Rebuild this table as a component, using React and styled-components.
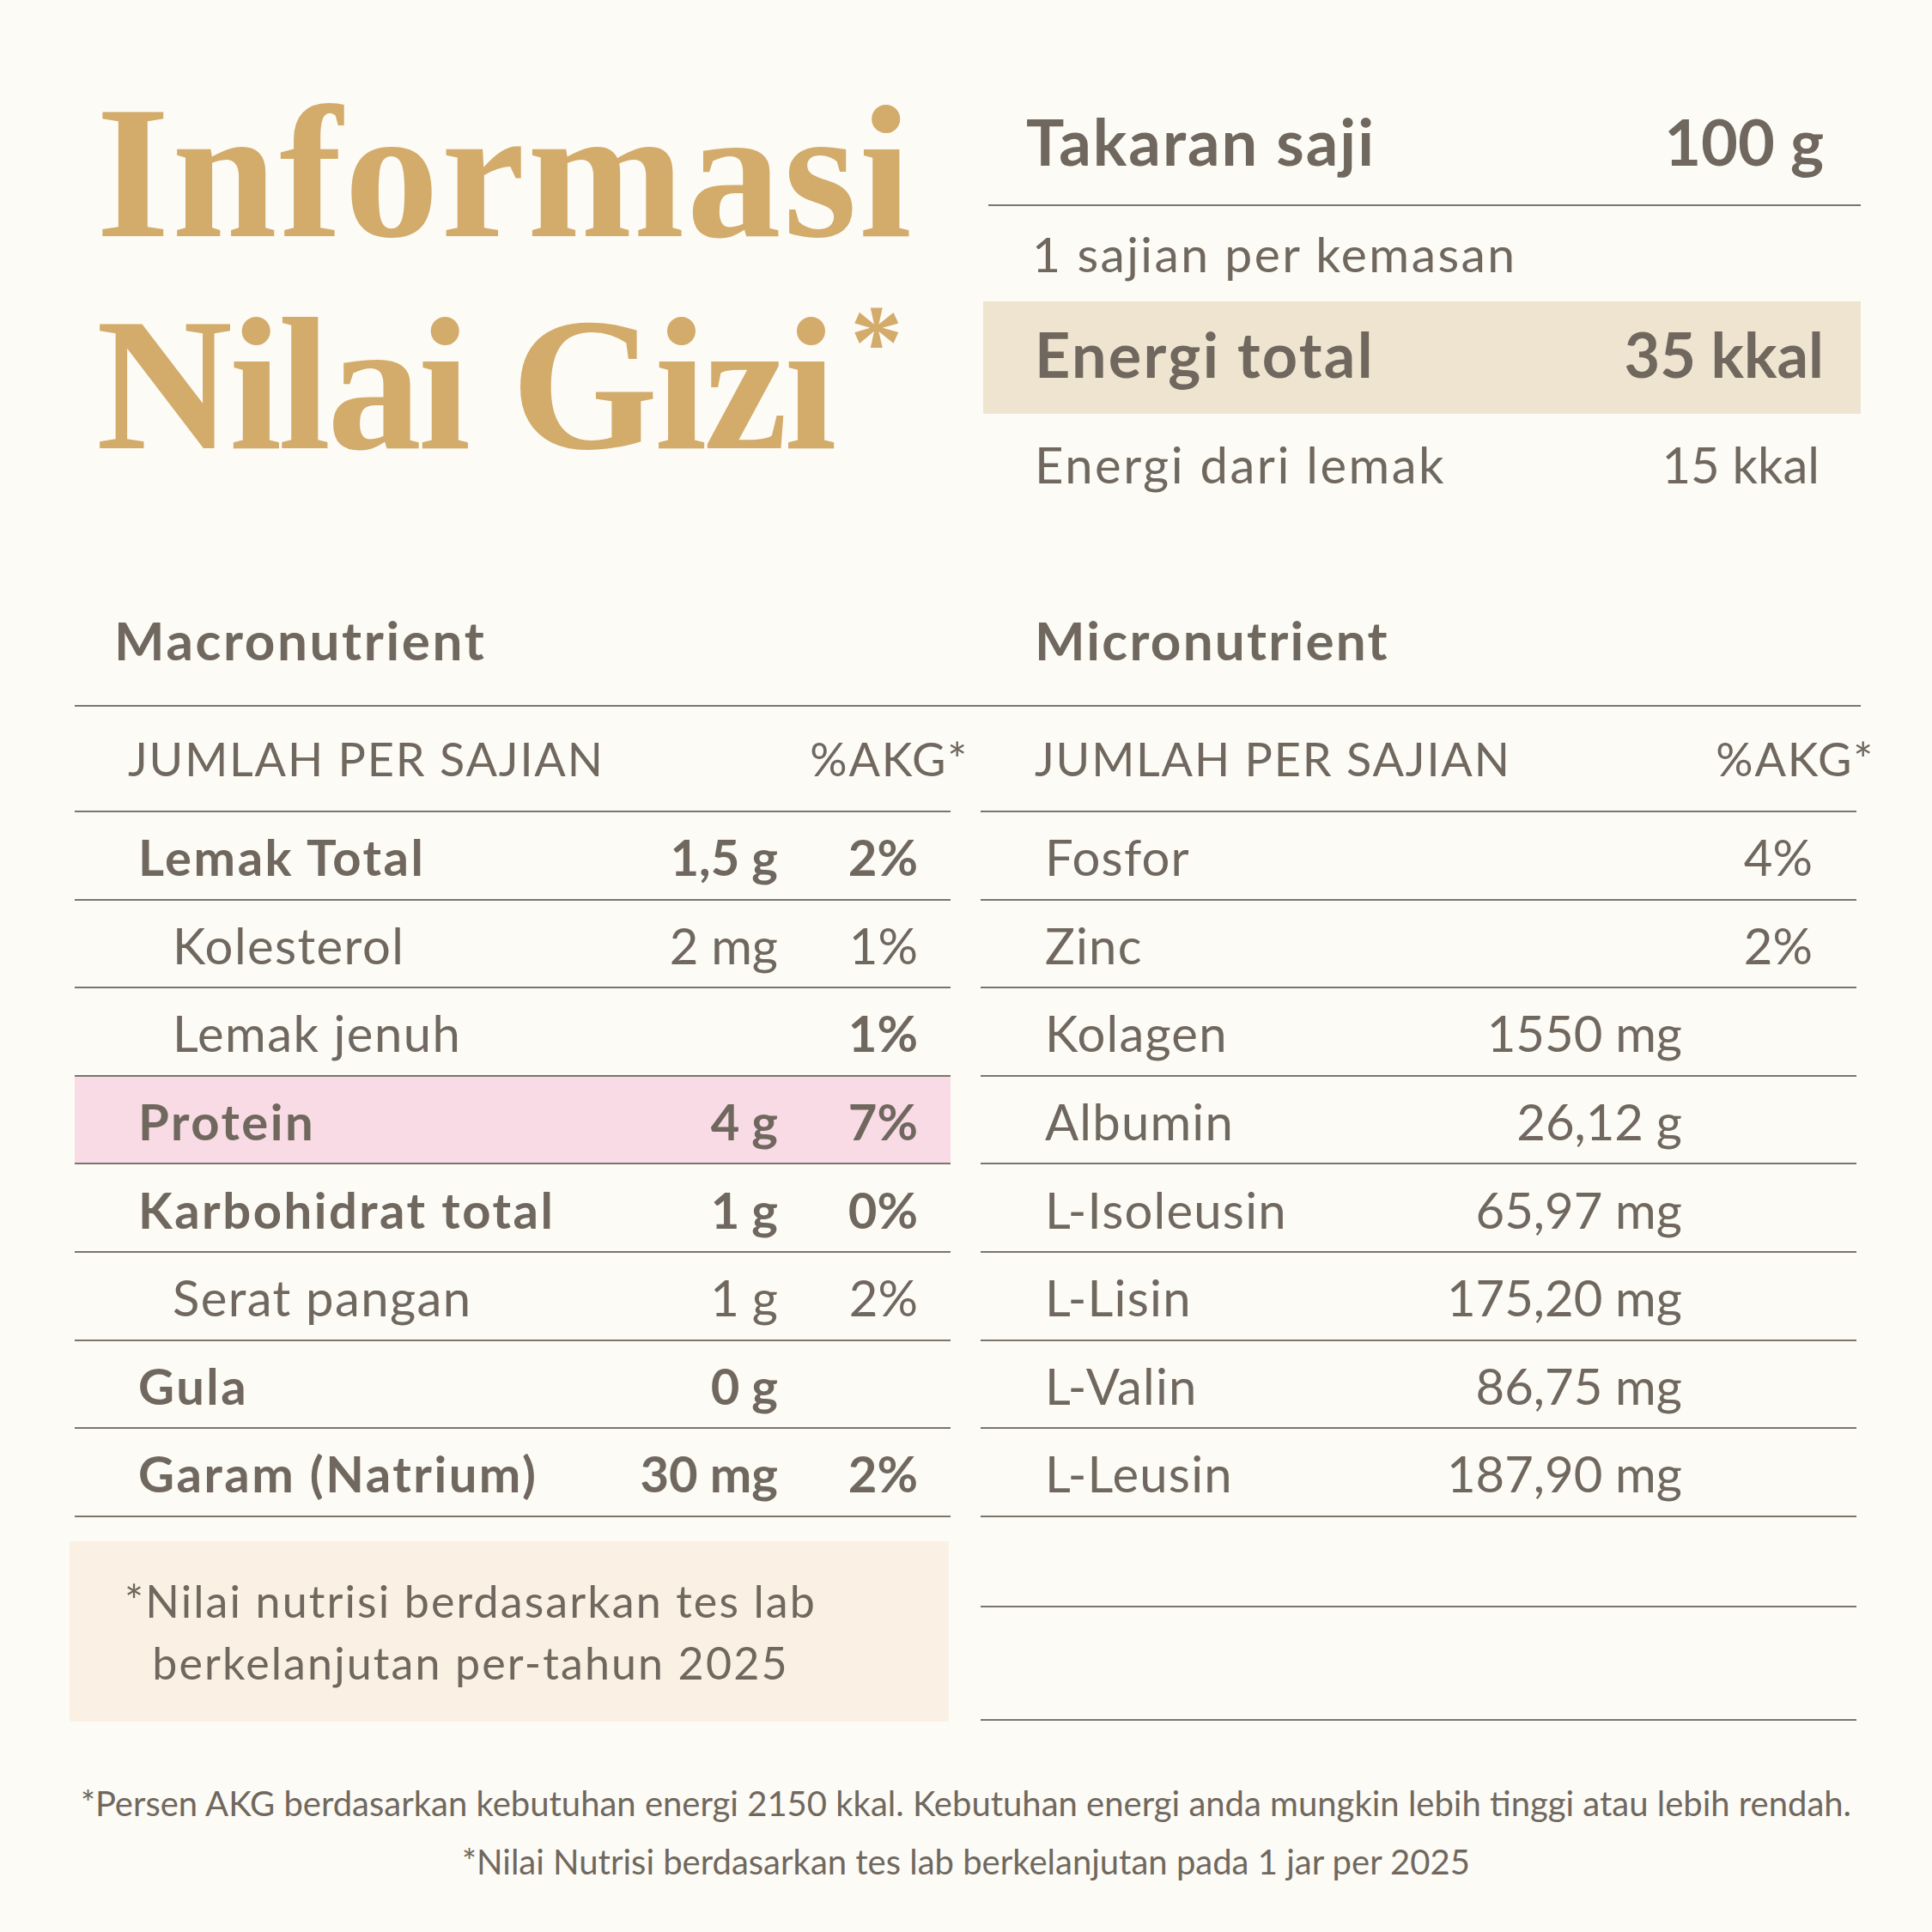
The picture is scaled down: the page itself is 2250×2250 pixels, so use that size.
import React from "react";
import styled, { createGlobalStyle } from "styled-components";

const INK = "#70685E";
const RULE = "#7C756C";
const BG = "#FCFBF6";

const Global = createGlobalStyle`
  html, body { margin: 0; padding: 0; background: ${BG}; }
  body { font-family: Lato, "Noto Sans", sans-serif; color: ${INK}; }
  * { box-sizing: border-box; }
`;

const Page = styled.div`
  width: 2250px;
  height: 2250px;
  background: ${BG};
  overflow: hidden;
  display: flex;
  flex-direction: column;
`;

const Top = styled.section`
  display: grid;
  grid-template-columns: 1033px 1022px;
  padding-left: 112px;
`;

const Title = styled.h1`
  margin: 78px 0 0;
  font-family: "Liberation Serif", "DejaVu Serif", serif;
  font-weight: 700;
  font-size: 220px;
  line-height: 247px;
  color: #d3ab6a;
  white-space: nowrap;
`;

const TitleLine = styled.span`
  display: block;
  letter-spacing: ${(p) => p.$ls}px;
`;

const Star = styled.span`
  font-size: 122px;
  line-height: 0;
  letter-spacing: 0;
  vertical-align: 82px;
  margin-left: 20px;
`;

const Panel = styled.div`
  padding-top: 92px;
  display: flex;
  flex-direction: column;
`;

const PanelRow = styled.div`
  display: flex;
  align-items: center;
  justify-content: space-between;
  height: ${(p) => p.$h}px;
  margin-left: ${(p) => p.$ml || 0}px;
  padding: 0 ${(p) => p.$pr}px ${(p) => p.$pb || 0}px ${(p) => p.$pl}px;
  background: ${(p) => p.$bg || "transparent"};
  border-bottom: ${(p) => (p.$line ? `2px solid ${RULE}` : "none")};
  font-size: ${(p) => p.$fs}px;
  font-weight: ${(p) => (p.$bold ? 700 : 400)};
  line-height: 1;
  white-space: nowrap;
`;

const Label = styled.span`
  letter-spacing: ${(p) => p.$ls || 0}px;
`;

const Lower = styled.section`
  margin-left: 87px;
  width: 2080px;
`;

const HeadRow = styled.div`
  display: grid;
  grid-template-columns: 1055px 1025px;
  align-items: end;
  height: 223px;
  padding-bottom: 45px;
  border-bottom: 2px solid ${RULE};
`;

const SectionTitle = styled.h2`
  margin: 0;
  padding-left: ${(p) => p.$pl}px;
  font-size: 62px;
  font-weight: 700;
  line-height: 1;
  letter-spacing: ${(p) => p.$ls}px;
`;

const Tables = styled.div`
  display: grid;
  grid-template-columns: 1020px 1020px;
  column-gap: 35px;
  align-items: start;
`;

const Column = styled.div`
  display: flex;
  flex-direction: column;
`;

const ColHead = styled.div`
  display: flex;
  align-items: center;
  justify-content: space-between;
  height: 123px;
  padding-left: ${(p) => p.$pl}px;
  border-bottom: 2px solid ${RULE};
  font-size: 54px;
  line-height: 1;
  letter-spacing: 1.8px;
  white-space: nowrap;
`;

const AkgLabel = styled.span`
  margin-right: -21px;
`;

const Row = styled.div`
  display: grid;
  grid-template-columns: 1fr auto ${(p) => p.$pctw}px;
  align-items: center;
  height: 102.6px;
  padding: 4px ${(p) => p.$pr}px 0 ${(p) => p.$pl}px;
  background: ${(p) => (p.$pink ? "#F8DBE5" : "transparent")};
  border-bottom: 2px solid ${RULE};
  font-size: 58px;
  line-height: 1;
  white-space: nowrap;
`;

const Name = styled.span`
  font-weight: ${(p) => (p.$bold ? 700 : 400)};
  padding-left: ${(p) => (p.$sub ? 40 : 0)}px;
  letter-spacing: ${(p) => (p.$bold ? 2.5 : p.$ls ?? 1.4)}px;
`;

const Amount = styled.span`
  text-align: right;
  font-weight: ${(p) => (p.$bold ? 700 : 400)};
`;

const Pct = styled.span`
  text-align: right;
  font-weight: ${(p) => (p.$bold ? 700 : 400)};
`;

const EmptyRow = styled.div`
  height: ${(p) => p.$h}px;
  border-bottom: 2px solid ${RULE};
`;

const NoteBox = styled.div`
  margin: 28px 0 0 -6px;
  width: 1024px;
  height: 210px;
  background: #faf1e4;
  display: flex;
  align-items: center;
  justify-content: center;
  padding: 0 130px 0 40px;
  font-size: 52px;
  line-height: 72px;
  letter-spacing: 2.1px;
  text-align: center;
`;

const Footer = styled.footer`
  margin-top: 61px;
  display: flex;
  flex-direction: column;
  align-items: center;
  font-size: 40px;
  line-height: 68px;
  white-space: nowrap;
`;

const macro = [
  { n: "Lemak Total", a: "1,5 g", p: "2%", bold: true },
  { n: "Kolesterol", a: "2 mg", p: "1%", sub: true },
  { n: "Lemak jenuh", a: "", p: "1%", sub: true, pb: true },
  { n: "Protein", a: "4 g", p: "7%", bold: true, pink: true },
  { n: "Karbohidrat total", a: "1 g", p: "0%", bold: true },
  { n: "Serat pangan", a: "1 g", p: "2%", sub: true },
  { n: "Gula", a: "0 g", p: "", bold: true },
  { n: "Garam (Natrium)", a: "30 mg", p: "2%", bold: true },
];

const micro = [
  { n: "Fosfor", a: "", p: "4%" },
  { n: "Zinc", a: "", p: "2%" },
  { n: "Kolagen", a: "1550 mg", p: "" },
  { n: "Albumin", a: "26,12 g", p: "" },
  { n: "L-Isoleusin", a: "65,97 mg", p: "" },
  { n: "L-Lisin", a: "175,20 mg", p: "" },
  { n: "L-Valin", a: "86,75 mg", p: "" },
  { n: "L-Leusin", a: "187,90 mg", p: "" },
];

export default function App() {
  return (
    <Page>
      <Global />
      <Top>
        <Title>
          <TitleLine $ls={2.6}>Informasi</TitleLine>
          <TitleLine $ls={-4}>
            Nilai Gizi<Star>*</Star>
          </TitleLine>
        </Title>
        <Panel>
          <PanelRow $h={148} $ml={6} $pl={44} $pr={43} $fs={74} $bold $line>
            <Label $ls={2}>Takaran saji</Label>
            <span>100 g</span>
          </PanelRow>
          <PanelRow $h={111} $pl={57} $pr={43} $fs={57}>
            <Label $ls={2.4}>1 sajian per kemasan</Label>
          </PanelRow>
          <PanelRow $h={131} $pl={60} $pr={43} $pb={10} $fs={72} $bold $bg="#EFE4CF">
            <Label $ls={2.3}>Energi total</Label>
            <span>35 kkal</span>
          </PanelRow>
          <PanelRow $h={118} $pl={60} $pr={48} $fs={58}>
            <Label $ls={2.5}>Energi dari lemak</Label>
            <span>15 kkal</span>
          </PanelRow>
        </Panel>
      </Top>

      <Lower>
        <HeadRow>
          <SectionTitle $pl={46} $ls={2.6}>Macronutrient</SectionTitle>
          <SectionTitle $pl={63} $ls={2.2}>Micronutrient</SectionTitle>
        </HeadRow>
        <Tables>
          <Column>
            <ColHead $pl={62}>
              <span>JUMLAH PER SAJIAN</span>
              <AkgLabel>%AKG*</AkgLabel>
            </ColHead>
            {macro.map((r) => (
              <Row key={r.n} $pl={74} $pr={38} $pctw={163} $pink={r.pink}>
                <Name $bold={r.bold} $sub={r.sub}>{r.n}</Name>
                <Amount $bold={r.bold}>{r.a}</Amount>
                <Pct $bold={r.bold || r.pb}>{r.p}</Pct>
              </Row>
            ))}
            <NoteBox>
              *Nilai nutrisi berdasarkan tes lab berkelanjutan per-tahun 2025
            </NoteBox>
          </Column>
          <Column>
            <ColHead $pl={63}>
              <span>JUMLAH PER SAJIAN</span>
              <AkgLabel>%AKG*</AkgLabel>
            </ColHead>
            {micro.map((r) => (
              <Row key={r.n} $pl={75} $pr={51} $pctw={152}>
                <Name $ls={1.2}>{r.n}</Name>
                <Amount>{r.a}</Amount>
                <Pct>{r.p}</Pct>
              </Row>
            ))}
            <EmptyRow $h={105} />
            <EmptyRow $h={132} />
          </Column>
        </Tables>
      </Lower>

      <Footer>
        <div>
          *Persen AKG berdasarkan kebutuhan energi 2150 kkal. Kebutuhan energi anda mungkin lebih tinggi atau lebih rendah.
        </div>
        <div>*Nilai Nutrisi berdasarkan tes lab berkelanjutan pada 1 jar per 2025</div>
      </Footer>
    </Page>
  );
}
